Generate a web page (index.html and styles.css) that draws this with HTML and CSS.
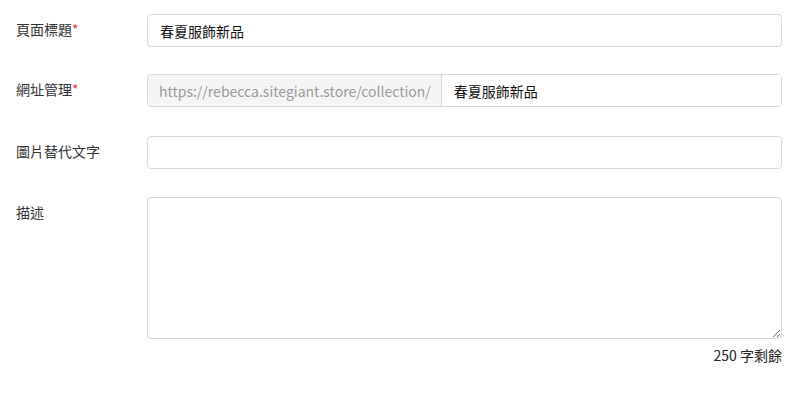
FILE: index.html
```html
<!DOCTYPE html>
<html lang="zh-Hant">
<head>
    <meta charset="UTF-8">
    <meta name="viewport" content="width=device-width, initial-scale=1.0">
    <title>頁面設定</title>
    <link rel="stylesheet" href="styles.css">
</head>
<body>

    <form class="page-form">
        <div class="form-row">
            <label class="form-label" for="pageTitle">頁面標題<span class="required">*</span></label>
            <div class="form-field">
                <input type="text" id="pageTitle" class="form-input" value="春夏服飾新品">
            </div>
        </div>

        <div class="form-row">
            <label class="form-label" for="pageUrl">網址管理<span class="required">*</span></label>
            <div class="form-field">
                <div class="input-group">
                    <span class="input-addon">https://rebecca.sitegiant.store/collection/</span>
                    <input type="text" id="pageUrl" class="form-input group-input" value="春夏服飾新品">
                </div>
            </div>
        </div>

        <div class="form-row">
            <label class="form-label" for="altText">圖片替代文字</label>
            <div class="form-field">
                <input type="text" id="altText" class="form-input">
            </div>
        </div>

        <div class="form-row">
            <label class="form-label" for="desc">描述</label>
            <div class="form-field">
                <textarea id="desc" class="form-textarea"></textarea>
                <div class="char-count">250 字剩餘</div>
            </div>
        </div>
    </form>

</body>
</html>
```

FILE: styles.css
```css
body {
    margin: 0;
    font-family: "Noto Sans CJK TC", "Noto Sans", sans-serif;
    font-size: 14px;
    color: #333;
    background: #fff;
}

.page-form {
    padding: 14px 18px 0 16px;
}

.form-row {
    display: flex;
    margin-bottom: 27px;
}

.form-row:nth-child(2) {
    margin-bottom: 29px;
}

.form-row:nth-child(3) {
    margin-bottom: 28px;
}

.form-label {
    width: 131px;
    flex-shrink: 0;
    line-height: 30px;
    color: #333;
}

.required {
    color: #e53935;
}

.form-field {
    flex: 1;
}

.form-input {
    box-sizing: border-box;
    width: 100%;
    height: 33px;
    padding: 0 12px;
    border: 1px solid #d9d9d9;
    border-radius: 4px;
    font-family: inherit;
    font-size: 14px;
    color: #111;
    outline: none;
}

.input-group {
    display: flex;
    height: 33px;
    border: 1px solid #d9d9d9;
    border-radius: 4px;
    box-sizing: border-box;
    overflow: hidden;
}

.input-addon {
    display: flex;
    align-items: center;
    padding: 0 10px 0 11px;
    background: #f5f5f5;
    border-right: 1px solid #d9d9d9;
    color: #999;
    white-space: nowrap;
}

.group-input {
    height: 31px;
    border: none;
    border-radius: 0;
}

.form-textarea {
    display: block;
    box-sizing: border-box;
    width: 100%;
    height: 142px;
    padding: 6px 12px;
    border: 1px solid #d9d9d9;
    border-radius: 4px;
    font-family: inherit;
    font-size: 14px;
    outline: none;
    resize: vertical;
}

.char-count {
    text-align: right;
    line-height: 32px;
    color: #222;
}
```
